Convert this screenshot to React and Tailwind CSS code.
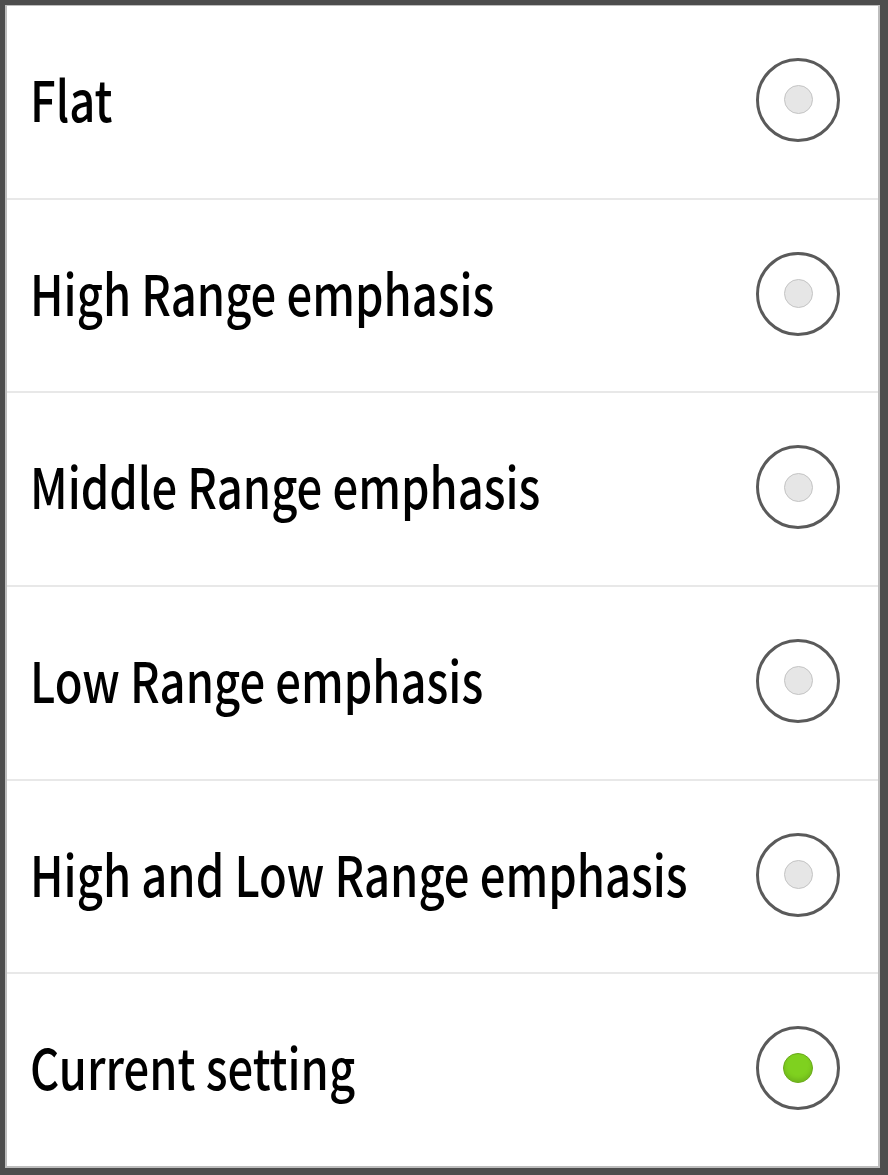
import React from "react";

const options = [
  { label: "Flat", checked: false },
  { label: "High Range emphasis", checked: false },
  { label: "Middle Range emphasis", checked: false },
  { label: "Low Range emphasis", checked: false },
  { label: "High and Low Range emphasis", checked: false },
  { label: "Current setting", checked: true },
];

const Radio = ({ checked }) => (
  <div className="shrink-0 w-[84px] h-[84px] rounded-full border-[3px] border-[#5a5a5a] flex items-center justify-center bg-white">
    {checked ? (
      <div className="w-[30px] h-[30px] rounded-full bg-[#7fd11f] border border-[#6aa81c] shadow-[inset_0_-3px_4px_rgba(0,0,0,0.12)]" />
    ) : (
      <div className="w-[29px] h-[29px] rounded-full bg-[#e6e6e6] border border-[#c4c4c4]" />
    )}
  </div>
);

const App = () => {
  return (
    <div className="w-[888px] h-[1175px] bg-[#4d4d4d] pt-[5px] pl-[5px] pr-[8px] pb-[7px] flex">
      <div className="flex-1 min-w-0 bg-white border-l-2 border-t border-r-2 border-b-2 border-[#bdbdbd] flex flex-col">
        {options.map((o, i) => (
          <div
            key={o.label}
            className={
              "flex-1 min-w-0 flex items-center justify-between pl-[23px] pr-[38px] pb-[4px] " +
              (i < options.length - 1 ? "border-b-2 border-[#e8e8e8]" : "")
            }
          >
            <span className="flex-1 min-w-0 whitespace-nowrap text-[56px] font-medium text-black font-['Noto_Sans_CJK_JP',sans-serif] leading-none scale-x-[0.81] origin-left -translate-y-[2px]">
              {o.label}
            </span>
            <Radio checked={o.checked} />
          </div>
        ))}
      </div>
    </div>
  );
};

export default App;
